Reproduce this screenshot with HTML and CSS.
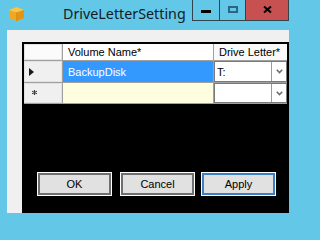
FILE: index.html
```html
<!DOCTYPE html>
<html>
<head>
<meta charset="utf-8">
<link rel="stylesheet" href="styles.css">
</head>
<body>
<div class="window">
  <div class="titlebar">
    <svg class="app-icon" viewBox="0 0 15 14" width="15" height="14">
      <polygon points="7.5,0 15,3 15,11 7.5,14 0,11 0,3" fill="#f0a91f"/>
      <polygon points="7.5,0 15,3 7.5,5.5 0,3" fill="#f7c54e"/>
      <polygon points="7.5,5.5 15,3 15,11 7.5,14" fill="#e39512"/>
      <line x1="7.5" y1="5.5" x2="7.5" y2="14" stroke="#d88a0c" stroke-width="0.8"/>
    </svg>
    <span class="title">DriveLetterSetting</span>
    <div class="controls">
      <div class="ctl ctl-min"><span class="min-glyph"></span></div>
      <div class="ctl ctl-max"><span class="max-glyph"></span></div>
      <div class="ctl ctl-close">
        <svg viewBox="0 0 9 7" width="9" height="7"><path d="M1 0.5 L8 6.5 M8 0.5 L1 6.5" stroke="#000" stroke-width="2"/></svg>
      </div>
    </div>
  </div>
  <div class="client">
    <div class="grid-view">
      <div class="table">
        <div class="cell corner"></div>
        <div class="cell col-hdr">Volume Name*</div>
        <div class="cell col-hdr col-hdr-2">Drive Letter*</div>

        <div class="cell row-hdr"><span class="current-arrow"></span></div>
        <div class="cell sel">BackupDisk</div>
        <div class="cell combo"><span class="combo-text">T:</span><span class="drop"><svg viewBox="0 0 7 5" width="7" height="5"><path d="M0.8 0.8 L3.5 3.6 L6.2 0.8" fill="none" stroke="#6d6d6d" stroke-width="1.6"/></svg></span></div>

        <div class="cell row-hdr"><svg class="new-star" viewBox="0 0 5 5" width="5" height="5"><path d="M2.5 0 V5 M0 1.2 L5 3.8 M0 3.8 L5 1.2" stroke="#3a3a3a" stroke-width="1.1"/></svg></div>
        <div class="cell new-row"></div>
        <div class="cell combo"><span class="combo-text"></span><span class="drop"><svg viewBox="0 0 7 5" width="7" height="5"><path d="M0.8 0.8 L3.5 3.6 L6.2 0.8" fill="none" stroke="#6d6d6d" stroke-width="1.6"/></svg></span></div>
      </div>
      <div class="buttons">
        <button class="btn btn-ok">OK</button>
        <button class="btn btn-cancel">Cancel</button>
        <button class="btn btn-apply">Apply</button>
      </div>
    </div>
  </div>
</div>
</body>
</html>
```

FILE: styles.css
```css
html, body {
  margin: 0;
  padding: 0;
}
body {
  background: #63c8e8;
  font-family: "Liberation Sans", Arial, sans-serif;
  color: #000;
}
.window {
  width: 297px;
  height: 220px;
  display: flex;
  flex-direction: column;
}
.titlebar {
  height: 30px;
  display: flex;
  align-items: flex-start;
  flex: none;
}
.app-icon {
  margin: 7px 0 0 9px;
  flex: none;
}
.title {
  margin: 4px 0 0 39px;
  font-family: "Noto Sans", "Open Sans", sans-serif;
  font-size: 14.3px;
  line-height: 20px;
  color: #141b22;
  white-space: nowrap;
}
.controls {
  margin-left: auto;
  margin-right: 8px;
  display: flex;
  height: 21px;
  box-sizing: border-box;
  border: 1px solid #33434d;
  border-top: none;
}
.ctl {
  display: flex;
  align-items: center;
  justify-content: center;
  height: 20px;
}
.ctl-min {
  width: 26px;
  border-right: 1px solid #33434d;
}
.ctl-max {
  width: 25px;
  border-right: 1px solid #33434d;
}
.ctl-close {
  width: 42px;
  background: #c75050;
}
.min-glyph {
  width: 10px;
  height: 3px;
  background: #000;
  margin-top: 3px;
}
.max-glyph {
  width: 10px;
  height: 7px;
  box-sizing: border-box;
  border: 2px solid #2b6583;
  margin-top: -1px;
}
.ctl-close svg {
  margin-top: -1px;
}
.client {
  margin: 0 8px 0 7px;
  height: 183px;
  background: #f0f0f0;
  padding: 12px 0 0 15px;
  box-sizing: border-box;
  display: flex;
}
.grid-view {
  flex: 1;
  background: #000;
  padding: 2px 0 0 2px;
  display: flex;
  flex-direction: column;
}
.table {
  align-self: flex-start;
  display: grid;
  grid-template-columns: 38px 150px 73px;
  grid-template-rows: 16px 21px 20px;
  gap: 1px;
  padding-bottom: 1px;
  background: #a0a0a0;
  font-size: 11px;
}
.cell {
  box-sizing: border-box;
  display: flex;
  align-items: center;
  white-space: nowrap;
  overflow: hidden;
}
.corner {
  background: #fbfbfb;
  box-shadow: inset 0 0 0 1px #e4e4e4;
}
.col-hdr {
  background: #ffffff;
  padding-left: 5px;
}
.col-hdr-2 {
  background: #f9f9f9;
}
.row-hdr {
  background: #f0f0f0;
  box-shadow: inset 0 0 0 1px #e2e2e2;
}
.current-arrow {
  margin-left: 5px;
  width: 0;
  height: 0;
  border-left: 5px solid #1a1a1a;
  border-top: 4px solid transparent;
  border-bottom: 4px solid transparent;
}
.new-star {
  margin: -2px 0 0 8px;
}
.sel {
  background: #3399ff;
  color: #fff;
  padding-left: 5px;
}
.new-row {
  background: #fffde0;
}
.combo {
  background: #fff;
  border: 1px solid #7a7a7a;
  align-items: stretch;
}
.combo-text {
  flex: 1;
  display: flex;
  align-items: center;
  padding-left: 2px;
}
.drop {
  width: 14px;
  border-left: 1px solid #9a9a9a;
  display: flex;
  align-items: center;
  justify-content: center;
}
.buttons {
  margin-top: auto;
  margin-bottom: 17px;
  padding-left: 13px;
  display: flex;
}
.btn {
  box-sizing: border-box;
  width: 75px;
  height: 24px;
  margin: 0;
  padding: 0;
  border: 1px solid #fff;
  box-shadow: inset 0 0 0 2px #6f6f6f;
  background: #e1e1e1;
  font-family: "Liberation Sans", Arial, sans-serif;
  font-size: 11px;
  color: #000;
  line-height: 20px;
}
.btn-cancel {
  margin-left: 8px;
}
.btn-apply {
  margin-left: 6px;
  box-shadow: inset 0 0 0 2px #3a80c2;
}
```
